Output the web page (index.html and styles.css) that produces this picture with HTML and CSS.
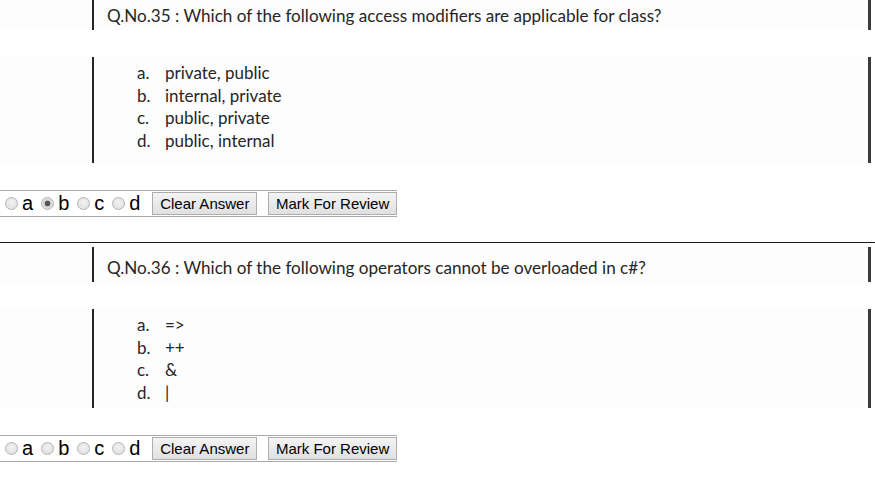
FILE: index.html
```html
<!DOCTYPE html>
<html>
<head>
<meta charset="utf-8">
<title>Questions</title>
<link rel="stylesheet" href="styles.css">
</head>
<body>
<div class="page">
  <div class="question">
    <div class="qimg head">
      <div class="frame"><span class="qtext">Q.No.35 : Which of the following access modifiers are applicable for class?</span></div>
    </div>
    <div class="qimg opts opts-35">
      <div class="frame">
        <div class="opt"><span class="ol">a.</span><span>private, public</span></div>
        <div class="opt"><span class="ol">b.</span><span>internal, private</span></div>
        <div class="opt"><span class="ol">c.</span><span>public, private</span></div>
        <div class="opt"><span class="ol">d.</span><span>public, internal</span></div>
      </div>
    </div>
    <div class="answers">
      <input type="radio" name="q35" class="radio"><span class="letter">a</span>
      <input type="radio" name="q35" class="radio" checked><span class="letter">b</span>
      <input type="radio" name="q35" class="radio"><span class="letter">c</span>
      <input type="radio" name="q35" class="radio"><span class="letter">d</span>
      <button class="btn btn-clear">Clear Answer</button>
      <button class="btn btn-mark">Mark For Review</button>
    </div>
    <div class="rule"></div>
  </div>

  <div class="question">
    <div class="qimg head">
      <div class="frame"><span class="qtext">Q.No.36 : Which of the following operators cannot be overloaded in c#?</span></div>
    </div>
    <div class="qimg opts opts-36">
      <div class="frame">
        <div class="opt"><span class="ol">a.</span><span class="sym">=&gt;</span></div>
        <div class="opt"><span class="ol">b.</span><span class="sym">++</span></div>
        <div class="opt"><span class="ol">c.</span><span class="sym">&amp;</span></div>
        <div class="opt"><span class="ol">d.</span><span class="sym">|</span></div>
      </div>
    </div>
    <div class="answers">
      <input type="radio" name="q36" class="radio"><span class="letter">a</span>
      <input type="radio" name="q36" class="radio"><span class="letter">b</span>
      <input type="radio" name="q36" class="radio"><span class="letter">c</span>
      <input type="radio" name="q36" class="radio"><span class="letter">d</span>
      <button class="btn btn-clear">Clear Answer</button>
      <button class="btn btn-mark">Mark For Review</button>
    </div>
  </div>
</div>
</body>
</html>
```
FILE: styles.css
```css
html, body {
  margin: 0;
  padding: 0;
  background: #ffffff;
}
.page {
  margin-top: -5px;
}
.qimg {
  width: 864px;
  background: #fdfdfd;
  box-sizing: border-box;
}
.frame {
  margin-left: 92px;
  width: 779px;
  height: 100%;
  box-sizing: border-box;
  border-left: 2px solid #262626;
  border-right: 3px solid #3a3a3a;
  font-family: Lato, "Open Sans", sans-serif;
  color: #262626;
}
.head {
  height: 35px;
}
.head .frame {
  padding-left: 13px;
  padding-top: 4px;
  line-height: 33px;
  font-size: 17.1px;
}
.opts {
  margin-top: 27px;
}
.opts-35 { height: 106px; }
.opts-36 { height: 99px; }
.opts .frame {
  padding-left: 43px;
  padding-top: 5px;
  font-size: 17px;
  line-height: 22.6px;
}
.opt {
  display: flex;
}
.ol {
  width: 28px;
}
.sym {
  color: #262626;
}
.answers {
  margin-top: 27px;
  width: 397px;
  height: 25px;
  border-top: 1px solid #a9a9a9;
  border-bottom: 1px solid #a9a9a9;
  display: flex;
  align-items: center;
  font-family: "Liberation Sans", Arial, sans-serif;
}
.radio {
  appearance: none;
  -webkit-appearance: none;
  width: 13px;
  height: 13px;
  margin: 0 4px 0 8px;
  border-radius: 50%;
  border: 1px solid #b4b4b4;
  background: radial-gradient(circle at 50% 40%, #f2f2f2 0%, #dcdcdc 100%);
  box-sizing: border-box;
  flex: none;
}
.radio:first-child {
  margin-left: 5px;
}
.radio:checked {
  background: radial-gradient(circle, #555 0, #555 2.5px, #d4d4d4 3.2px, #ececec 100%);
}
.letter {
  font-size: 20px;
  color: #000;
  line-height: 25px;
}
.btn {
  height: 23px;
  margin: 0;
  padding: 0;
  border: 1px solid #adadad;
  border-radius: 0;
  background: linear-gradient(#f4f4f4, #e0e0e0);
  font-family: "Liberation Sans", Arial, sans-serif;
  font-size: 15px;
  color: #000;
  box-sizing: border-box;
}
.btn-clear {
  width: 105px;
  margin-left: 12px;
}
.btn-mark {
  width: 129px;
  margin-left: 11px;
}
.rule {
  margin-top: 25px;
  height: 1px;
  background: #1a1a1a;
  margin-bottom: 4px;
}
```
